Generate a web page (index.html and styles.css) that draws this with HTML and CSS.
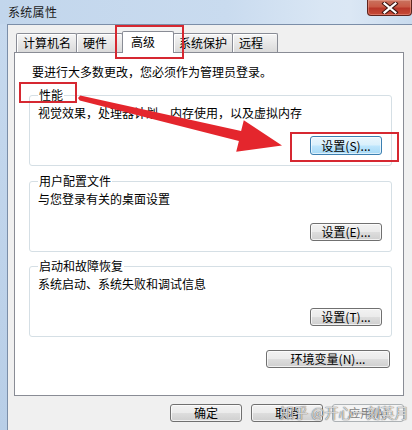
FILE: index.html
```html
<!DOCTYPE html>
<html lang="zh-CN">
<head>
<meta charset="utf-8">
<title>系统属性</title>
<link rel="stylesheet" href="styles.css">
</head>
<body>
<div class="win">
  <div class="titlebar">
    <span class="title">系统属性</span>
    <div class="close">
      <svg width="20" height="12" viewBox="0 0 20 12"><path d="M4.5 1.5 L15.5 10.5 M15.5 1.5 L4.5 10.5" stroke="#3b1410" stroke-width="4.2" stroke-linecap="square" fill="none"/><path d="M4.5 1.5 L15.5 10.5 M15.5 1.5 L4.5 10.5" stroke="#ffffff" stroke-width="2.2" stroke-linecap="square" fill="none"/></svg>
    </div>
  </div>
  <div class="frame">
    <div class="client">
      <div class="tabs">
        <div class="tab t1">计算机名</div>
        <div class="tab t2">硬件</div>
        <div class="tab t3 sel">高级</div>
        <div class="tab t4">系统保护</div>
        <div class="tab t5">远程</div>
      </div>
      <div class="panel">
        <p class="note">要进行大多数更改，您必须作为管理员登录。</p>
        <fieldset class="group g1">
          <legend>性能</legend>
          <p class="desc">视觉效果，处理器计划，内存使用，以及虚拟内存</p>
          <div class="row"><button class="btn focus">设置(S)...</button></div>
        </fieldset>
        <fieldset class="group g2">
          <legend>用户配置文件</legend>
          <p class="desc">与您登录有关的桌面设置</p>
          <div class="row"><button class="btn">设置(E)...</button></div>
        </fieldset>
        <fieldset class="group g3">
          <legend>启动和故障恢复</legend>
          <p class="desc">系统启动、系统失败和调试信息</p>
          <div class="row"><button class="btn">设置(T)...</button></div>
        </fieldset>
        <div class="row env"><button class="btn wide">环境变量(N)...</button></div>
      </div>
      <div class="footer">
        <button class="btn foot">确定</button>
        <button class="btn foot">取消</button>
        <button class="btn foot disabled">应用(A)</button>
      </div>
    </div>
  </div>

  <div class="mark m-tab"></div>
  <div class="mark m-perf"></div>
  <div class="mark m-btn"></div>
  <svg class="arrow" width="412" height="430" viewBox="0 0 412 430">
    <polygon fill="#e4262d" points="80.3,95.4 241.1,131.1 243.8,120.2 282,145.6 236.2,151.8 238.9,140.9 79.7,100.6 78,98"/>
  </svg>
  <span class="watermark">知乎 @开心一刻英月</span>
</div>
</body>
</html>
```

FILE: styles.css
```css
* { box-sizing: border-box; }
html, body { margin: 0; padding: 0; }
body {
  width: 412px;
  height: 430px;
  overflow: hidden;
  font-family: "Noto Sans CJK SC", "Noto Sans", sans-serif;
  font-size: 12px;
  color: #000;
  background: #c6d9ee;
}
.win {
  position: relative;
  width: 412px;
  height: 430px;
  display: flex;
  flex-direction: column;
}
.titlebar {
  height: 24px;
  flex: none;
  display: flex;
  justify-content: space-between;
  align-items: flex-start;
  background: linear-gradient(to right, #c2d6ec 0%, #c9dbef 55%, #d9e6f4 78%, #dbe7f4 85%, #c9dbee 100%);
}
.title {
  margin-left: 8px;
  margin-top: 4px;
  line-height: 16px;
  font-size: 12px;
  color: #1b1b1b;
  letter-spacing: 0.3px;
}
.close {
  width: 45px;
  height: 16px;
  margin-right: 0;
  border: 1px solid #5e231c;
  border-top: none;
  border-radius: 0 0 4px 4px;
  background: linear-gradient(#c9735f 0%, #c95a46 45%, #b8382a 55%, #c74a36 100%);
  box-shadow: inset 0 0 0 1px rgba(255, 200, 190, 0.35);
  display: flex;
  justify-content: center;
  align-items: center;
}
.frame {
  flex: 1;
  display: flex;
  padding-left: 7px;
  background: linear-gradient(#c6d9ee, #b8cee7);
}
.client {
  flex: 1;
  border-left: 1px solid #7b8ea8;
  border-top: 1px solid #7b8ea8;
  background: #f0f0f0;
  padding: 6px 8px 0 6px;
  display: flex;
  flex-direction: column;
}
.tabs {
  height: 21px;
  display: flex;
  align-items: flex-end;
  padding-left: 2px;
}
.tab {
  height: 19px;
  line-height: 17px;
  padding-left: 6px;
  border: 1px solid #898c95;
  border-bottom: none;
  border-radius: 2px 2px 0 0;
  background: linear-gradient(#f6f6f6, #e6e6e6 55%, #dadada);
  box-shadow: inset 1px 1px 0 #ffffff;
  white-space: nowrap;
  color: #000;
}
.t1 { width: 61px; }
.t2 { width: 47px; margin-left: -1px; }
.t3 { width: 52px; margin-left: -1px; }
.t4 { width: 60px; margin-left: -1px; padding-left: 5px; }
.t5 { width: 46px; margin-left: -1px; }
.tab.sel {
  height: 22px;
  margin-bottom: -1px;
  padding-left: 8px;
  line-height: 19px;
  background: #ffffff;
  box-shadow: none;
  position: relative;
  z-index: 1;
}
.panel {
  width: 390px;
  height: 344px;
  background: #ffffff;
  border: 1px solid #898c95;
  padding: 11px 11px 0 14px;
  display: flex;
  flex-direction: column;
}
.note {
  margin: 0 0 7px 3px;
  line-height: 16px;
}
.group {
  margin: 0;
  min-width: 0;
  border: 1px solid #d5dfe5;
  border-radius: 3px;
  padding: 0 8px 10px 8px;
}
.group legend {
  padding: 0 1px;
  margin-left: 0;
  line-height: 16px;
}
.g2 { margin-top: 7px; }
.g3 { margin-top: 6px; }
.desc {
  margin: 2px 0 0 0;
  line-height: 16px;
}
.row {
  display: flex;
  justify-content: flex-end;
  margin-top: 16px;
}
.g1 .row { margin-top: 15px; padding-right: 1px; }
.g2 .row, .g3 .row { padding-right: 1px; }
.btn {
  height: 18px;
  width: 72px;
  padding: 0;
  border: 1px solid #707070;
  border-radius: 3px;
  background: linear-gradient(#f2f2f2 0%, #ebebeb 48%, #dddddd 52%, #cfcfcf 100%);
  box-shadow: inset 0 0 0 1px rgba(255, 255, 255, 0.7);
  font-family: "Noto Sans CJK SC", "Noto Sans", sans-serif;
  font-size: 12px;
  line-height: 16px;
  color: #000;
}
.btn.focus {
  height: 19px;
  border-color: #3c7fb1;
  background: linear-gradient(#eaf6fd 0%, #d9f0fc 48%, #bee6fd 52%, #a7d9f5 100%);
  box-shadow: inset 0 0 0 1px rgba(255, 255, 255, 0.6);
}
.env {
  margin-top: 13px;
  padding-right: 2px;
}
.btn.wide { width: 124px; }
.footer {
  margin-top: 8px;
  display: flex;
  justify-content: flex-end;
  gap: 9px;
}
.btn.foot { width: 72px; }
.btn.disabled {
  border-color: #adb2b5;
  background: #f4f4f4;
  box-shadow: none;
  color: #838383;
}
.mark {
  position: absolute;
  border: 2px solid #d62831;
  pointer-events: none;
}
.m-tab { left: 115px; top: 25px; width: 69px; height: 34px; }
.m-perf { left: 19px; top: 82px; width: 58px; height: 21px; }
.m-btn { left: 290px; top: 132px; width: 109px; height: 30px; }
.arrow {
  position: absolute;
  left: 0;
  top: 0;
  pointer-events: none;
}
.watermark {
  position: absolute;
  left: 280px;
  top: 403px;
  font-size: 14px;
  line-height: 18px;
  color: rgba(255, 255, 255, 0.75);
  text-shadow: 0 0 1px rgba(60, 60, 60, 0.8), 0 0 1px rgba(60, 60, 60, 0.6);
  white-space: nowrap;
  pointer-events: none;
}
```
